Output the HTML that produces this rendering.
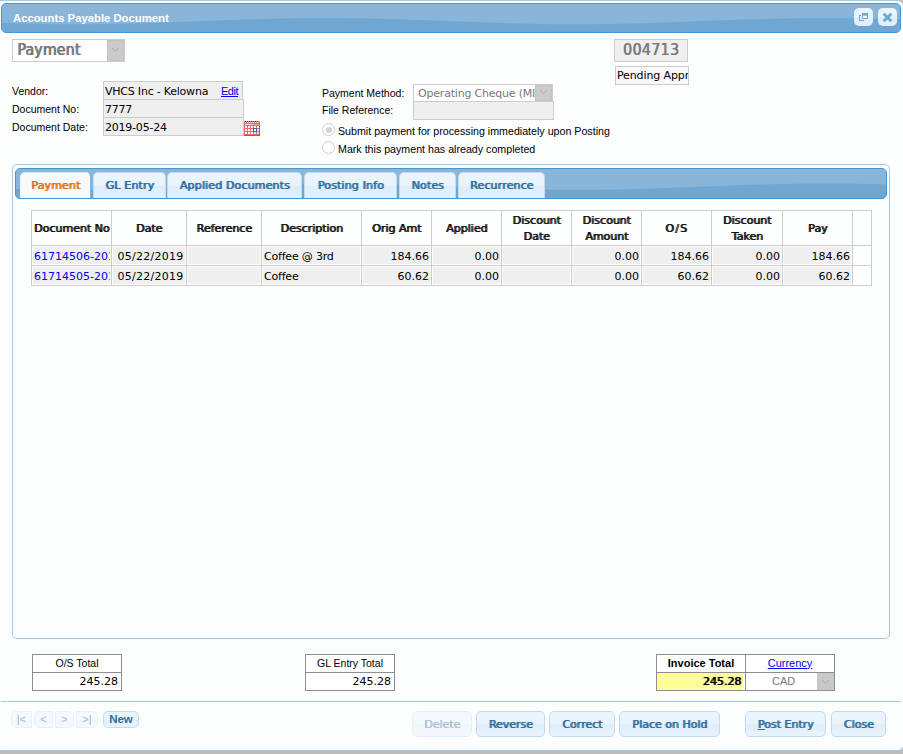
<!DOCTYPE html>
<html lang="en">
<head>
<meta charset="utf-8">
<title>Accounts Payable Document</title>
<style>
html,body{margin:0;padding:0;}
body{width:903px;height:754px;overflow:hidden;background:#bcbcbc;position:relative;
  font-family:"Liberation Sans",Arial,sans-serif;font-size:11px;color:#000;}
*{box-sizing:border-box;}
.abs{position:absolute;}
.luc{font-family:"DejaVu Sans","Liberation Sans",sans-serif;}
.lucb{font-family:"DejaVu Sans","Liberation Sans",sans-serif;font-weight:normal;text-shadow:1px 0 0 currentColor;}
#dialog{position:absolute;left:-2px;top:0;width:906px;height:751px;background:#fcfdfd;
  border:1px solid #a6c9e2;border-radius:0 6px 6px 3px;}
#titlebar{position:absolute;left:1px;top:3px;width:900px;height:30px;border:1px solid #4297d7;
  border-radius:5px;background:#6fa7d2;overflow:hidden;}
#titlebar svg{position:absolute;left:0;top:0;}
#title{position:absolute;left:11px;top:7px;color:#fff;font-weight:bold;font-size:11.3px;line-height:14px;white-space:nowrap;}
.tbtn{position:absolute;top:8px;width:19px;height:18px;border-radius:5px;
  background:linear-gradient(to bottom,#ebf5fd 0,#e9f3fd 50%,#dfeefa 52%,#e2effb 100%);}
.lbl{position:absolute;font-size:10.5px;line-height:14px;white-space:nowrap;color:#000;}
.inp{position:absolute;border:1px solid #cccccc;background:#efefef;font-size:11px;line-height:16px;
  padding-left:1px;padding-top:2px;letter-spacing:-0.22px;white-space:nowrap;overflow:hidden;}
.sel{position:absolute;border:1px solid #cccccc;background:#ffffff;white-space:nowrap;overflow:hidden;color:#777;}
.sel .dd{position:absolute;right:0;top:0;bottom:0;width:17px;background:#cbcbcb;box-shadow:inset 0 0 0 1px #c3c3c3;}
.sel .dd svg{position:absolute;left:50%;top:50%;margin:-4px 0 0 -5px;}
a{color:#0000ee;text-decoration:underline;}
.radio{position:absolute;width:13px;height:13px;border-radius:50%;border:1px solid #cfcfcf;background:#fdfdfd;}
.radio.on::after{content:"";position:absolute;left:2.5px;top:2.5px;width:6px;height:6px;border-radius:50%;background:#d2d2d2;}
#tabs{position:absolute;left:12px;top:164px;width:878px;height:475px;border:1px solid #a6c9e2;border-radius:5px;background:#fcfdfd;}
#tabnav{position:absolute;left:15px;top:168px;width:872px;height:31px;border:1px solid #4297d7;border-radius:5px;background:#6fa7d2;overflow:hidden;}
.tab{position:absolute;top:172px;height:26px;border:1px solid #c5dbec;border-bottom:none;border-radius:5px 5px 0 0;
  background:linear-gradient(to bottom,#ebf5fd 0,#e8f3fd 50%,#deedfa 52%,#e3f0fb 100%);
  color:#2e6e9e;font-size:11px;line-height:26px;text-align:center;white-space:nowrap;letter-spacing:0.15px;}
.tab.act{background:#f7f9fb;border-color:#d9e6f2 #79b7e7 #79b7e7 #f0f5fa;color:#e17009;}
#grid{position:absolute;left:31px;top:210px;border-collapse:collapse;table-layout:fixed;width:840px;}
#grid th,#grid td{border:1px solid #cccccc;padding:0;}
#grid th{height:35px;padding-top:2px;font-size:11px;line-height:16px;color:#111;text-align:center;background:#fdfefe;font-weight:normal;}
#grid td{height:20px;padding:1px;}
#grid td div{height:17px;background:#efefef;font-size:11px;line-height:20px;white-space:nowrap;overflow:hidden;padding:0 1px;}
#grid td.r div{text-align:right;}
#grid td.e{background:#fdfefe;}
.tot{position:absolute;border-collapse:collapse;table-layout:fixed;}
.tot td{border:1px solid #8e8e8e;padding:0;height:18px;background:#fff;font-size:11px;line-height:14px;text-align:center;white-space:nowrap;}
.tot td.h{padding-bottom:2px;font-size:10.5px;}
.btn{position:absolute;border:1px solid #c5dbec;border-radius:5px;color:#2e6e9e;text-align:center;white-space:nowrap;
  background:linear-gradient(to bottom,#ebf5fd 0,#e8f3fd 50%,#dfeefa 52%,#e8f3fc 100%);}
.btn.big{top:711px;height:26px;font-size:11px;line-height:26px;}
.btn.nav{top:711px;height:17px;font-size:11px;line-height:15px;opacity:.36;font-weight:bold;font-family:"Liberation Sans",sans-serif;}
.dis{opacity:.38;}
</style>
</head>
<body>
<div id="dialog"></div>

<!-- title bar -->
<div id="titlebar">
  <svg width="898" height="28" viewBox="0 0 898 28">
    <rect width="898" height="28" fill="#6fa7d2"/>
    <path d="M0,0H898L898,15.3L890,15.0L880,14.7L870,14.5L860,14.3L850,14.2L840,14.1L830,14.0L820,14.0L810,14.0L800,14.1L790,14.3L780,14.5L770,14.7L760,15.0L750,15.3L740,15.6L730,16.0L720,16.3L710,16.7L700,17.1L690,17.5L680,17.9L670,18.3L660,18.6L650,19.0L640,19.3L630,19.6L620,19.8L610,20.0L600,20.1L590,20.2L580,20.3L570,20.3L560,20.3L550,20.2L540,20.0L530,19.8L520,19.6L510,19.3L500,19.0L490,18.7L480,18.3L470,18.0L460,17.6L450,17.2L440,16.8L430,16.4L420,16.0L410,15.7L400,15.3L390,15.0L380,14.7L370,14.5L360,14.3L350,14.2L340,14.1L330,14.0L320,14.0L310,14.0L300,14.1L290,14.3L280,14.5L270,14.7L260,15.0L250,15.3L240,15.6L230,16.0L220,16.3L210,16.7L200,17.1L190,17.5L180,17.9L170,18.3L160,18.6L150,19.0L140,19.3L130,19.6L120,19.8L110,20.0L100,20.1L90,20.2L80,20.3L70,20.3L60,20.3L50,20.2L40,20.0L30,19.8L20,19.6L10,19.3L0,19.0Z" fill="#89b5d9"/>
  </svg>
  <div id="title">Accounts Payable Document</div>
</div>
<div class="tbtn" style="left:854px;">
  <svg width="19" height="18" viewBox="0 0 19 18" style="position:absolute;left:0;top:0" shape-rendering="crispEdges">
    <rect x="5" y="7" width="1" height="6" fill="#6da8d5"/><rect x="5" y="12" width="5" height="1" fill="#6da8d5"/><rect x="5" y="7" width="2" height="1" fill="#6da8d5"/>
    <rect x="8" y="5" width="6" height="6" fill="#6da8d5"/><rect x="9" y="7" width="4" height="1" fill="#9cc4e3"/><rect x="9" y="8" width="4" height="2" fill="#f4f9fe"/>
  </svg>
</div>
<div class="tbtn" style="left:878px;">
  <svg width="19" height="18" viewBox="0 0 19 18" style="position:absolute;left:0;top:0">
    <path d="M5.7,5.7L13.3,13.3M13.3,5.7L5.7,13.3" fill="none" stroke="#6da8d5" stroke-width="2.8"/>
  </svg>
</div>

<!-- top form -->
<div class="sel lucb" style="left:12px;top:39px;width:113px;height:23px;font-family:'DejaVu Sans Condensed','DejaVu Sans',sans-serif;font-size:15.7px;letter-spacing:0.2px;line-height:20px;padding-left:4px;">Payment<span class="dd"><svg width="9" height="6" viewBox="0 0 9 6"><path d="M1,1L4.5,4.5L8,1" fill="none" stroke="#aaaaaa" stroke-width="1"/></svg></span></div>

<div class="inp lucb" style="left:614px;top:39px;width:74px;height:23px;font-family:'DejaVu Sans Condensed','DejaVu Sans',sans-serif;font-size:15.7px;line-height:20px;color:#7c7c7c;text-align:center;padding:0;letter-spacing:0.4px;text-shadow:0.7px 0 0 currentColor;">004713</div>
<div class="inp luc" style="left:615px;top:66px;width:74px;height:19px;background:#f8f8f8;line-height:16px;padding-left:1px;padding-top:1px;letter-spacing:-0.12px;">Pending Appr</div>

<div class="lbl" style="left:12px;top:84px;">Vendor:</div>
<div class="lbl" style="left:12px;top:102px;">Document No:</div>
<div class="lbl" style="left:12px;top:120px;">Document Date:</div>
<div class="inp luc" style="left:103px;top:81px;width:140px;height:19px;">VHCS Inc - Kelowna<a class="abs" style="left:117px;top:1px;font-family:'Liberation Sans',sans-serif;font-size:11px;letter-spacing:-0.5px;">Edit</a></div>
<div class="inp luc" style="left:103px;top:99px;width:141px;height:19px;">7777</div>
<div class="inp luc" style="left:103px;top:117px;width:141px;height:19px;">2019-05-24</div>
<svg class="abs" style="left:244px;top:121px;" width="16" height="15" viewBox="0 0 16 15" shape-rendering="crispEdges">
  <rect x="0" y="0" width="16" height="15" fill="#ea6a64"/>
  <rect x="0" y="0" width="16" height="2" fill="#ee8a84"/>
  <rect x="1" y="0" width="1" height="1" fill="#4a2a2a"/><rect x="1" y="1" width="1" height="1" fill="#fff"/><rect x="3" y="0" width="1" height="1" fill="#4a2a2a"/><rect x="3" y="1" width="1" height="1" fill="#fff"/><rect x="5" y="0" width="1" height="1" fill="#4a2a2a"/><rect x="5" y="1" width="1" height="1" fill="#fff"/><rect x="7" y="0" width="1" height="1" fill="#4a2a2a"/><rect x="7" y="1" width="1" height="1" fill="#fff"/><rect x="9" y="0" width="1" height="1" fill="#4a2a2a"/><rect x="9" y="1" width="1" height="1" fill="#fff"/><rect x="11" y="0" width="1" height="1" fill="#4a2a2a"/><rect x="11" y="1" width="1" height="1" fill="#fff"/><rect x="13" y="0" width="1" height="1" fill="#4a2a2a"/><rect x="13" y="1" width="1" height="1" fill="#fff"/>
  <rect x="1" y="3" width="6" height="1" fill="#fbe3e1"/><rect x="7" y="3" width="8" height="1" fill="#f3a9a5"/>
  <rect x="1" y="5" width="2" height="2" fill="#fff" opacity="1"/><rect x="4" y="5" width="2" height="2" fill="#fff" opacity="1"/><rect x="7" y="5" width="2" height="2" fill="#fff" opacity="1"/><rect x="10" y="5" width="2" height="2" fill="#fff" opacity="1"/><rect x="13" y="5" width="2" height="2" fill="#fff" opacity="1"/><rect x="1" y="8" width="2" height="2" fill="#fff" opacity="1"/><rect x="4" y="8" width="2" height="2" fill="#fff" opacity="1"/><rect x="7" y="8" width="2" height="2" fill="#fff" opacity="1"/><rect x="10" y="8" width="2" height="2" fill="#fff" opacity="0.8"/><rect x="13" y="8" width="2" height="2" fill="#fff" opacity="0.8"/><rect x="1" y="11" width="2" height="2" fill="#fff" opacity="1"/><rect x="4" y="11" width="2" height="2" fill="#fff" opacity="1"/><rect x="7" y="11" width="2" height="2" fill="#fff" opacity="1"/><rect x="10" y="11" width="2" height="2" fill="#fff" opacity="0.8"/><rect x="13" y="11" width="2" height="2" fill="#fff" opacity="0.8"/>
  <rect x="15" y="5" width="1" height="10" fill="#b5504c"/><rect x="1" y="14" width="15" height="1" fill="#b5504c"/>
  <rect x="9" y="7" width="4" height="4" fill="#2b62dc"/><rect x="10" y="8" width="2" height="2" fill="#fff"/>
</svg>

<div class="lbl" style="left:322px;top:86px;">Payment Method:</div>
<div class="lbl" style="left:322px;top:103px;">File Reference:</div>
<div class="sel luc" style="left:413px;top:84px;width:140px;height:18px;font-size:11px;line-height:18px;padding-left:4px;letter-spacing:-0.2px;">Operating Cheque (MI<span class="dd"><svg width="9" height="6" viewBox="0 0 9 6"><path d="M1,1L4.5,4.5L8,1" fill="none" stroke="#aaaaaa" stroke-width="1"/></svg></span></div>
<div class="inp" style="left:413px;top:101px;width:141px;height:19px;"></div>
<div class="radio on" style="left:322px;top:123px;"></div>
<div class="radio" style="left:322px;top:141px;"></div>
<div class="lbl" style="left:338px;top:124px;font-size:10.67px;">Submit payment for processing immediately upon Posting</div>
<div class="lbl" style="left:338px;top:142px;font-size:10.67px;">Mark this payment has already completed</div>

<!-- tabs -->
<div id="tabs"></div>
<div id="tabnav">
  <svg width="870" height="29" viewBox="0 0 870 29" style="position:absolute;left:0;top:0">
    <rect width="870" height="29" fill="#6fa7d2"/>
    <path d="M0,0H870L870,15.4L860,15.1L850,14.9L840,14.7L830,14.6L820,14.5L810,14.5L800,14.5L790,14.6L780,14.7L770,14.9L760,15.1L750,15.4L740,15.6L730,16.0L720,16.3L710,16.7L700,17.1L690,17.5L680,17.8L670,18.2L660,18.6L650,19.0L640,19.3L630,19.7L620,19.9L610,20.2L600,20.4L590,20.6L580,20.7L570,20.8L560,20.8L550,20.8L540,20.7L530,20.6L520,20.4L510,20.2L500,19.9L490,19.7L480,19.3L470,19.0L460,18.6L450,18.2L440,17.8L430,17.5L420,17.1L410,16.7L400,16.3L390,16.0L380,15.6L370,15.4L360,15.1L350,14.9L340,14.7L330,14.6L320,14.5L310,14.5L300,14.5L290,14.6L280,14.7L270,14.9L260,15.1L250,15.4L240,15.6L230,16.0L220,16.3L210,16.7L200,17.1L190,17.5L180,17.8L170,18.2L160,18.6L150,19.0L140,19.3L130,19.7L120,19.9L110,20.2L100,20.4L90,20.6L80,20.7L70,20.8L60,20.8L50,20.8L40,20.7L30,20.6L20,20.4L10,20.2L0,19.9Z" fill="#89b5d9"/>
  </svg>
</div>
<div class="tab act lucb" style="left:20px;width:71px;">Payment</div>
<div class="tab lucb" style="left:93px;width:73px;">GL Entry</div>
<div class="tab lucb" style="left:167px;width:135px;">Applied Documents</div>
<div class="tab lucb" style="left:304px;width:93px;">Posting Info</div>
<div class="tab lucb" style="left:399px;width:57px;">Notes</div>
<div class="tab lucb" style="left:458px;width:87px;">Recurrence</div>

<table id="grid" class="luc">
<colgroup><col style="width:80px"><col style="width:75px"><col style="width:75px"><col style="width:100px"><col style="width:70px"><col style="width:70px"><col style="width:70px"><col style="width:70px"><col style="width:70px"><col style="width:71px"><col style="width:70px"><col style="width:19px"></colgroup>
<tr class="lucb"><th>Document No</th><th>Date</th><th>Reference</th><th>Description</th><th>Orig Amt</th><th>Applied</th><th>Discount<br>Date</th><th>Discount<br>Amount</th><th style="letter-spacing:1.2px">O/S</th><th>Discount<br>Taken</th><th>Pay</th><th></th></tr>
<tr><td><div style="color:#0000ee">61714506-201</div></td><td><div style="text-align:center;letter-spacing:0.25px;padding-left:4px;">05/22/2019</div></td><td><div></div></td><td><div style="letter-spacing:-0.2px">Coffee @ 3rd</div></td><td class="r"><div>184.66</div></td><td class="r"><div>0.00</div></td><td><div></div></td><td class="r"><div>0.00</div></td><td class="r"><div>184.66</div></td><td class="r"><div>0.00</div></td><td class="r"><div>184.66</div></td><td class="e"></td></tr>
<tr><td><div style="color:#0000ee">61714505-201</div></td><td><div style="text-align:center;letter-spacing:0.25px;padding-left:4px;">05/22/2019</div></td><td><div></div></td><td><div style="letter-spacing:-0.2px">Coffee</div></td><td class="r"><div>60.62</div></td><td class="r"><div>0.00</div></td><td><div></div></td><td class="r"><div>0.00</div></td><td class="r"><div>60.62</div></td><td class="r"><div>0.00</div></td><td class="r"><div>60.62</div></td><td class="e"></td></tr>
</table>

<!-- totals -->
<table class="tot" style="left:32px;top:654px;width:90px;"><tr><td class="h">O/S Total</td></tr><tr><td class="luc" style="text-align:right;padding-right:3px;">245.28</td></tr></table>
<table class="tot" style="left:305px;top:654px;width:90px;"><tr><td class="h">GL Entry Total</td></tr><tr><td class="luc" style="text-align:right;padding-right:3px;">245.28</td></tr></table>
<table class="tot" style="left:656px;top:654px;width:179px;"><colgroup><col style="width:89px"><col style="width:89px"></colgroup>
<tr><td class="h" style="font-weight:bold;font-size:11px;">Invoice Total</td><td class="h" style="font-size:11px;"><a>Currency</a></td></tr>
<tr><td class="lucb" style="text-align:right;"><div style="margin-right:2px;height:17px;line-height:17px;background:#ffff99;padding-right:2px;">245.28</div></td><td style="position:relative;color:#777;text-align:left;padding-left:26px;padding-bottom:2px;">CAD<span class="abs" style="right:0;top:0;width:17px;height:17px;background:#c8c8c8;"><svg class="abs" style="left:4px;top:6px" width="9" height="6" viewBox="0 0 9 6"><path d="M1,1L4.5,4.5L8,1" fill="none" stroke="#aaaaaa" stroke-width="1"/></svg></span></td></tr></table>

<div class="abs" style="left:1px;top:701px;width:900px;height:1px;background:#a6c9e2;"></div>

<!-- nav buttons -->
<div class="btn nav" style="left:11px;width:21px;border-radius:5px 0 0 5px;">|&lt;</div>
<div class="btn nav" style="left:34px;width:19px;border-radius:5px 0 0 5px;">&lt;</div>
<div class="btn nav" style="left:55px;width:19px;border-radius:0 5px 5px 0;">&gt;</div>
<div class="btn nav" style="left:76px;width:22px;border-radius:0 5px 5px 0;">&gt;|</div>
<div class="btn nav" style="left:103px;width:36px;opacity:1;font-size:11.5px;font-weight:bold;">New</div>

<!-- action buttons -->
<div class="btn big lucb dis" style="left:412px;width:60px;">Delete</div>
<div class="btn big lucb" style="left:476px;width:69px;">Reverse</div>
<div class="btn big lucb" style="left:549px;width:66px;">Correct</div>
<div class="btn big lucb" style="left:619px;width:101px;">Place on Hold</div>
<div class="btn big lucb" style="left:745px;width:81px;"><u>P</u>ost Entry</div>
<div class="btn big lucb" style="left:831px;width:55px;">Close</div>
</body>
</html>
